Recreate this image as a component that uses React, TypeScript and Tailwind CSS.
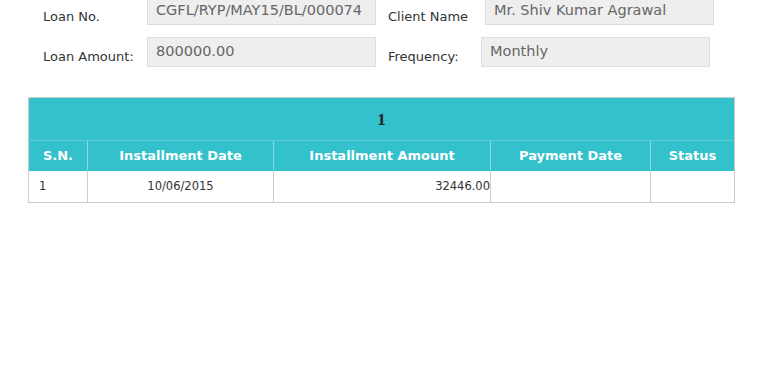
export default function App() {
  const font = { fontFamily: '"DejaVu Sans", Verdana, sans-serif' };

  return (
    <div className="w-[759px] h-[380px] overflow-hidden bg-white" style={font}>
      {/* Loan details */}
      <div className="-mt-[5px] pl-[43px] flex flex-col gap-[12px]">
        <div className="flex items-start h-[30px]">
          <div className="w-[104px] pt-[13px] leading-[18px] text-[13px] text-[#333]">Loan No.</div>
          <div className="w-[229px] h-[30px] px-[8px] pt-[4px] bg-[#eeeeee] border border-[#dddddd] text-[14.5px] text-[#666]">
            CGFL/RYP/MAY15/BL/000074
          </div>
          <div className="w-[97px] ml-[12px] pt-[13px] leading-[18px] text-[13px] text-[#333]">Client Name</div>
          <div className="w-[229px] h-[30px] px-[8px] pt-[4px] bg-[#eeeeee] border border-[#dddddd] text-[14.5px] text-[#666]">
            Mr. Shiv Kumar Agrawal
          </div>
        </div>
        <div className="flex items-start h-[30px]">
          <div className="w-[104px] pt-[11px] leading-[18px] text-[13px] text-[#333]">Loan Amount:</div>
          <div className="w-[229px] h-[30px] px-[8px] pt-[3px] bg-[#eeeeee] border border-[#dddddd] text-[14.5px] text-[#666]">
            800000.00
          </div>
          <div className="w-[93px] ml-[12px] pt-[11px] leading-[18px] text-[13px] text-[#333]">Frequency:</div>
          <div className="w-[229px] h-[30px] px-[8px] pt-[3px] bg-[#eeeeee] border border-[#dddddd] text-[14.5px] text-[#666]">
            Monthly
          </div>
        </div>
      </div>

      {/* Schedule table */}
      <div className="ml-[28px] mt-[30px] w-[706px]">
        <table className="w-full border-collapse border border-[#cccccc] table-fixed">
          <colgroup>
            <col className="w-[59px]" />
            <col className="w-[186px]" />
            <col className="w-[217px]" />
            <col className="w-[160px]" />
            <col className="w-[84px]" />
          </colgroup>
          <thead>
            <tr className="bg-[#33c1cc] h-[43px]">
              <th
                colSpan={5}
                className="pt-[1px] text-center text-[17px] font-bold text-[#222] border-b border-[#5fcbd3]"
                style={{ fontFamily: '"Liberation Serif", "Times New Roman", serif' }}
              >
                1
              </th>
            </tr>
            <tr className="bg-[#33c1cc] h-[30px] text-white text-[13px] font-bold">
              <th className="border-r border-[#8ad8de]">S.N.</th>
              <th className="border-r border-[#8ad8de]">Installment Date</th>
              <th className="border-r border-[#8ad8de]">Installment Amount</th>
              <th className="border-r border-[#8ad8de]">Payment Date</th>
              <th>Status</th>
            </tr>
          </thead>
          <tbody>
            <tr className="h-[32px] text-[11.5px] text-[#333]">
              <td className="pl-[10px] border-r border-[#cccccc]">1</td>
              <td className="text-center border-r border-[#cccccc]">10/06/2015</td>
              <td className="text-right border-r border-[#cccccc]">32446.00</td>
              <td className="border-r border-[#cccccc]"></td>
              <td></td>
            </tr>
          </tbody>
        </table>
      </div>
    </div>
  );
}
